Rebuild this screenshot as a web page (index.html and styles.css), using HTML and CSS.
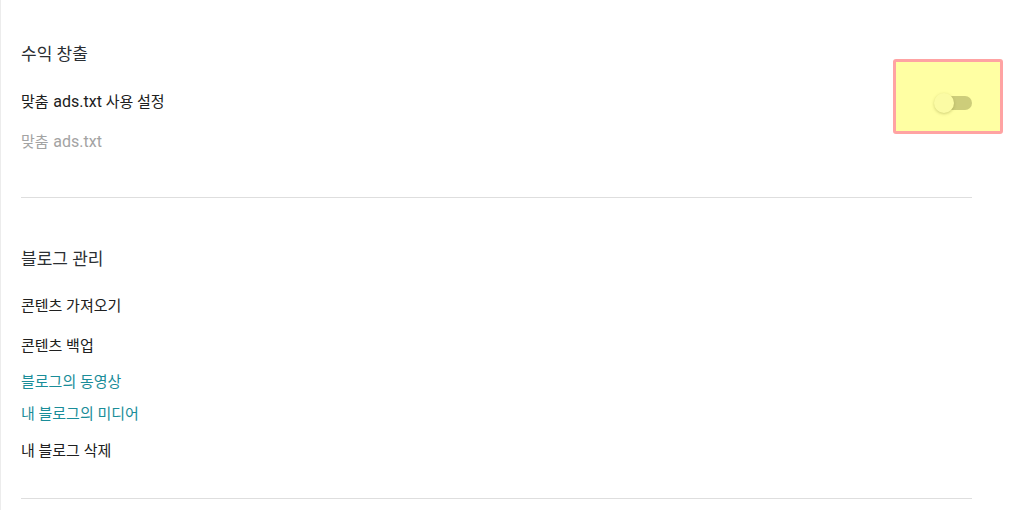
FILE: index.html
```html
<!DOCTYPE html>
<html lang="ko">
<head>
<meta charset="utf-8">
<link rel="stylesheet" href="styles.css">
</head>
<body>
<div class="page">
  <section class="section sec-money">
    <h2 class="title">수익 창출</h2>
    <div class="row">
      <span class="label">맞춤 <span class="latin">ads.txt</span> 사용 설정</span>
      <span class="switch"><span class="track"></span><span class="thumb"></span></span>
      <span class="highlight"></span>
    </div>
    <div class="desc">맞춤 <span class="latin">ads.txt</span></div>
  </section>
  <section class="section sec-manage">
    <h2 class="title">블로그 관리</h2>
    <ul class="items">
      <li class="item i1">콘텐츠 가져오기</li>
      <li class="item i2">콘텐츠 백업</li>
      <li class="item i3 link">블로그의 동영상</li>
      <li class="item i4 link">내 블로그의 미디어</li>
      <li class="item i5">내 블로그 삭제</li>
    </ul>
  </section>
</div>
</body>
</html>
```

FILE: styles.css
```css
html, body {
  margin: 0;
  padding: 0;
  background: #fff;
}
body {
  font-family: Roboto, "Noto Sans CJK KR", sans-serif;
  color: #212121;
  width: 1031px;
  height: 510px;
  overflow: hidden;
}
.page {
  border-left: 1px solid #ececec;
  padding: 0 59px 0 20px;
  min-height: 510px;
  box-sizing: border-box;
}
.section {
  border-bottom: 1px solid #dedede;
}
.sec-money {
  padding-top: 40px;
  padding-bottom: 45px;
}
.sec-manage {
  padding-top: 47px;
  padding-bottom: 37px;
}
.title {
  margin: 0;
  font-size: 17px;
  line-height: 28px;
  font-weight: 400;
  color: #2b2f33;
}
.row {
  position: relative;
  display: flex;
  align-items: center;
  justify-content: space-between;
  height: 30px;
  margin-top: 19px;
}
.label {
  font-size: 15px;
  line-height: 20px;
  color: #202020;
}
.latin {
  font-size: 16px;
  margin-left: 1px;
}
.switch {
  position: relative;
  width: 38px;
  height: 20px;
  margin-top: 2px;
  z-index: 2;
}
.track {
  position: absolute;
  left: 5px;
  top: 3px;
  width: 33px;
  height: 14px;
  border-radius: 7px;
  background: #cdcd7a;
}
.thumb {
  position: absolute;
  left: 0;
  top: 0;
  width: 20px;
  height: 20px;
  border-radius: 50%;
  background: #fbfba4;
  box-shadow: 0 1px 3px rgba(120, 120, 40, 0.35);
}
.highlight {
  position: absolute;
  right: -31px;
  top: -28px;
  width: 104px;
  height: 69px;
  background: #ffffa3;
  border: 3px solid #ffa3a3;
  border-radius: 3px;
  z-index: 1;
}
.desc {
  margin-top: 15px;
  font-size: 15px;
  line-height: 20px;
  color: #a3a3a3;
}
.items {
  list-style: none;
  margin: 23px 0 0;
  padding: 0;
}
.item {
  font-size: 15px;
  line-height: 20px;
  color: #202020;
}
.i2 { margin-top: 20px; }
.i3 { margin-top: 16px; }
.i4 { margin-top: 12px; }
.i5 { margin-top: 17px; }
.link {
  color: #1a8d99;
}
```
